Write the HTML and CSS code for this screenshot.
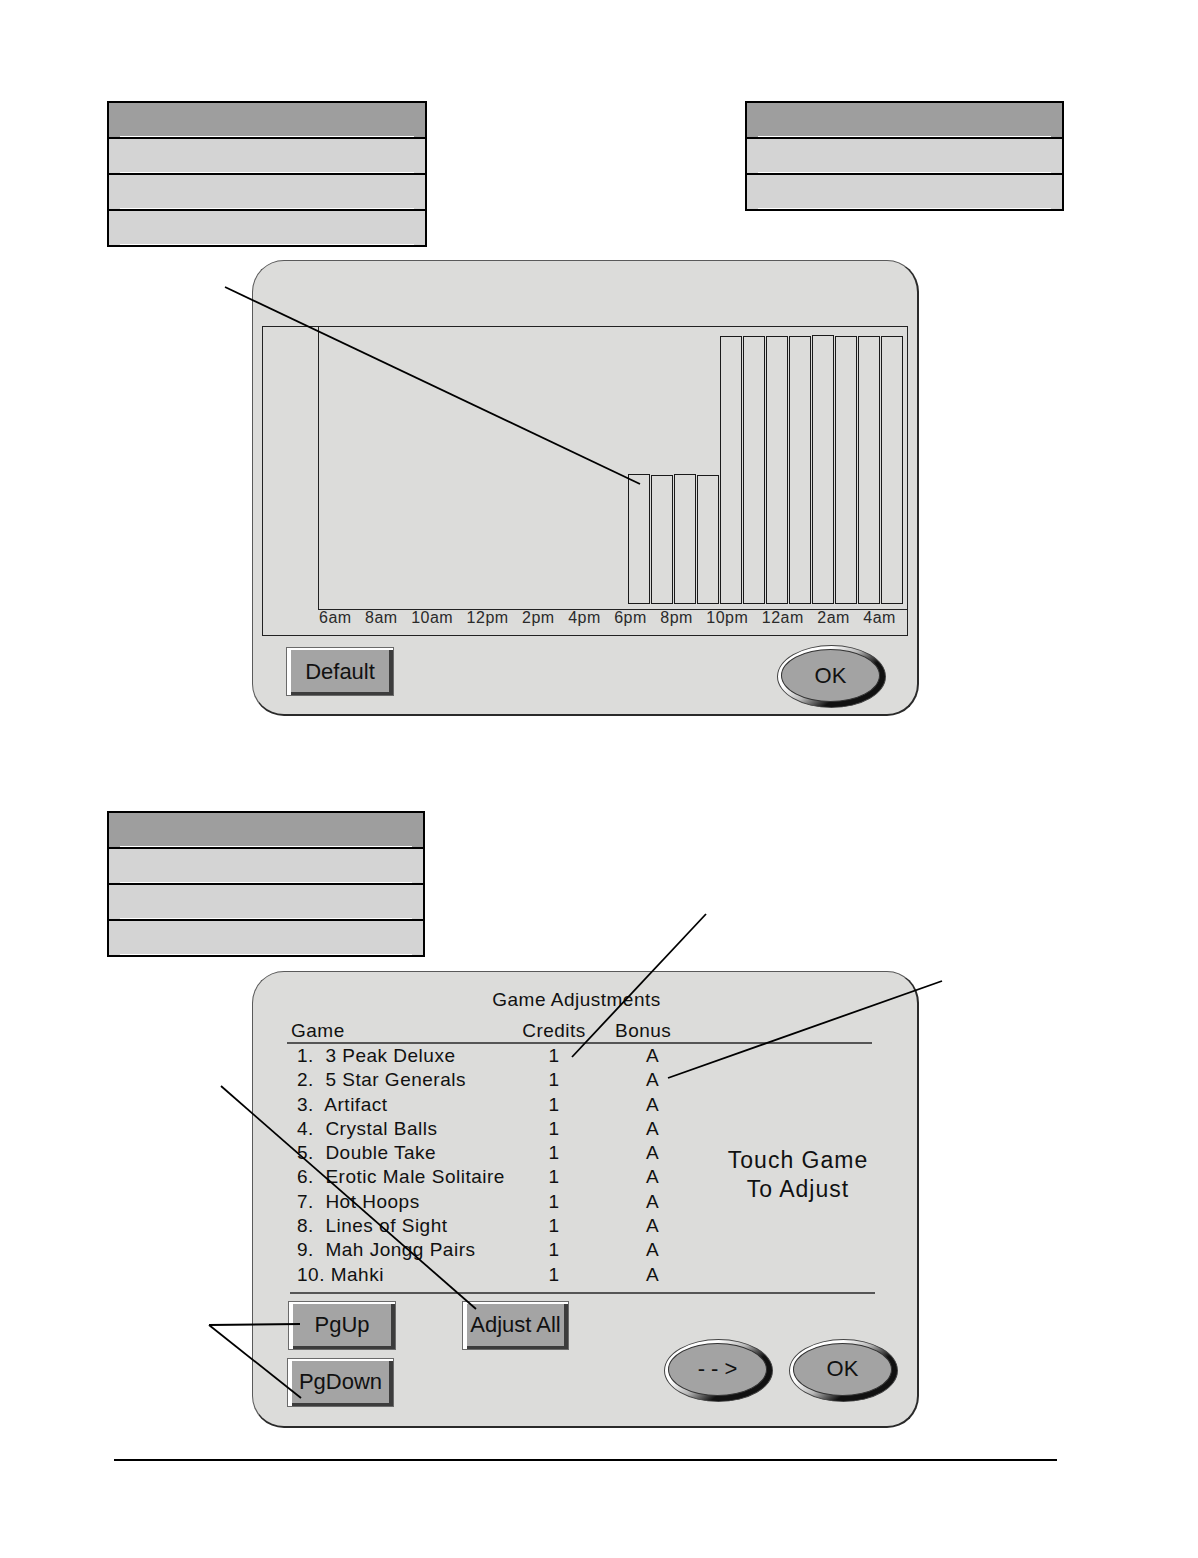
FILE: index.html
```html
<!DOCTYPE html>
<html lang="en">
<head>
    <meta charset="UTF-8">
    <title>Game Adjustments</title>
    <link rel="stylesheet" href="styles.css">
</head>
<body>
    <div class="page">
        <div class="menu-row">
            <div class="menu menu-wide">
                <div class="menu-item menu-head"></div>
                <div class="menu-item"></div>
                <div class="menu-item"></div>
                <div class="menu-item"></div>
            </div>
            <div class="menu menu-narrow">
                <div class="menu-item menu-head"></div>
                <div class="menu-item"></div>
                <div class="menu-item"></div>
            </div>
        </div>

        <!-- hourly chart screen -->
        <div class="panel panel-chart">
            <div class="chart">
                <div class="plot">
                    <div class="bar" style="height:130px"></div>
                    <div class="bar" style="height:129px"></div>
                    <div class="bar" style="height:130px"></div>
                    <div class="bar" style="height:129px"></div>
                    <div class="bar" style="height:268px"></div>
                    <div class="bar" style="height:268px"></div>
                    <div class="bar" style="height:268px"></div>
                    <div class="bar" style="height:268px"></div>
                    <div class="bar" style="height:269px"></div>
                    <div class="bar" style="height:268px"></div>
                    <div class="bar" style="height:268px"></div>
                    <div class="bar" style="height:268px"></div>
                </div>
                <div class="axis">
                    <span>6am</span><span>8am</span><span>10am</span><span>12pm</span>
                    <span>2pm</span><span>4pm</span><span>6pm</span><span>8pm</span>
                    <span>10pm</span><span>12am</span><span>2am</span><span>4am</span>
                </div>
            </div>
            <div class="panel-foot">
                <button class="btn">Default</button>
                <div class="oval oval-raised"><div class="oval-face">OK</div></div>
            </div>
        </div>

        <div class="menu menu-small">
            <div class="menu-item menu-head"></div>
            <div class="menu-item"></div>
            <div class="menu-item"></div>
            <div class="menu-item"></div>
        </div>

        <!-- game adjustments screen -->
        <div class="panel panel-games">
            <div class="games">
                <div class="games-title">Game Adjustments</div>
                <div class="games-head">
                    <span class="h-game">Game</span>
                    <span class="h-credits">Credits</span>
                    <span class="h-bonus">Bonus</span>
                </div>
                <div class="games-body">
                    <div class="games-list">
                        <div class="game"><span class="game-name">1.  3 Peak Deluxe</span><span class="game-credits">1</span><span class="game-bonus">A</span></div>
                        <div class="game"><span class="game-name">2.  5 Star Generals</span><span class="game-credits">1</span><span class="game-bonus">A</span></div>
                        <div class="game"><span class="game-name">3.  Artifact</span><span class="game-credits">1</span><span class="game-bonus">A</span></div>
                        <div class="game"><span class="game-name">4.  Crystal Balls</span><span class="game-credits">1</span><span class="game-bonus">A</span></div>
                        <div class="game"><span class="game-name">5.  Double Take</span><span class="game-credits">1</span><span class="game-bonus">A</span></div>
                        <div class="game"><span class="game-name">6.  Erotic Male Solitaire</span><span class="game-credits">1</span><span class="game-bonus">A</span></div>
                        <div class="game"><span class="game-name">7.  Hot Hoops</span><span class="game-credits">1</span><span class="game-bonus">A</span></div>
                        <div class="game"><span class="game-name">8.  Lines of Sight</span><span class="game-credits">1</span><span class="game-bonus">A</span></div>
                        <div class="game"><span class="game-name">9.  Mah Jongg Pairs</span><span class="game-credits">1</span><span class="game-bonus">A</span></div>
                        <div class="game"><span class="game-name">10. Mahki</span><span class="game-credits">1</span><span class="game-bonus">A</span></div>
                    </div>
                    <div class="games-hint">Touch Game<br>To Adjust</div>
                </div>
                <div class="games-rule"></div>
            </div>
            <div class="games-actions">
                <div class="pager">
                    <button class="btn">PgUp</button>
                    <button class="btn btn-down">PgDown</button>
                </div>
                <button class="btn btn-adjust">Adjust All</button>
                <div class="ovals">
                    <div class="oval"><div class="oval-face">- - &gt;</div></div>
                    <div class="oval"><div class="oval-face">OK</div></div>
                </div>
            </div>
        </div>

        <div class="page-rule"></div>

        <!-- callout leader lines -->
        <svg class="leaders" width="1198" height="1558" viewBox="0 0 1198 1558">
            <g stroke="#000" stroke-width="1.8" fill="none">
                <line x1="225" y1="287" x2="640" y2="484"/>
                <line x1="706" y1="914" x2="572" y2="1057"/>
                <line x1="942" y1="981" x2="668" y2="1078"/>
                <line x1="221" y1="1086" x2="476" y2="1309"/>
                <line x1="209" y1="1325" x2="300" y2="1324"/>
                <line x1="209" y1="1325" x2="301" y2="1398"/>
            </g>
        </svg>
    </div>
</body>
</html>
```

FILE: styles.css
```css
body {
    margin: 0;
    background-color: #ffffff;
    font-family: "Liberation Sans", Arial, sans-serif;
    color: #111111;
}
.page {
    position: relative;
    width: 1198px;
    height: 1558px;
    padding-top: 101px;
    box-sizing: border-box;
}
.leaders {
    position: absolute;
    left: 0;
    top: 0;
    pointer-events: none;
}

/* menu boxes */
.menu-row {
    display: flex;
    justify-content: space-between;
    align-items: flex-start;
    padding: 0 134px 0 107px;
}
.menu {
    border: 2px solid #000;
    box-sizing: border-box;
}
.menu-wide {
    width: 320px;
}
.menu-narrow {
    width: 319px;
}
.menu-small {
    width: 318px;
    margin: 95px 0 0 107px;
}
.menu-item {
    height: 34px;
    border-bottom: 2px solid #000;
    background: linear-gradient(#ffffff, #ffffff) center bottom / calc(100% - 22px) 1px no-repeat, #d4d4d4;
}
.menu-item:last-child {
    border-bottom: 0;
}
.menu-head {
    background-color: #9e9e9e;
}

/* screens */
.panel {
    margin-left: 252px;
    width: 667px;
    box-sizing: border-box;
    background-color: #dcdcda;
    border: 1px solid #5a5a5a;
    border-right: 2px solid #2a2a2a;
    border-bottom: 2px solid #2a2a2a;
    border-radius: 32px;
}
.panel-chart {
    margin-top: 13px;
    height: 456px;
    padding: 65px 0 0 9px;
}
.chart {
    width: 646px;
    height: 310px;
    box-sizing: border-box;
    border: 1px solid #222;
    display: flex;
    flex-direction: column;
}
.plot {
    margin-left: 55px;
    height: 283px;
    box-sizing: border-box;
    border-left: 1px solid #222;
    border-bottom: 1px solid #222;
    display: flex;
    align-items: flex-end;
    justify-content: flex-end;
    gap: 1px;
    padding: 0 4px 5px 0;
}
.bar {
    width: 22px;
    box-sizing: border-box;
    border: 1px solid #1a1a1a;
}
.axis {
    display: flex;
    justify-content: space-between;
    margin-top: 1px;
    padding: 0 11px 0 56px;
    font-size: 16px;
    line-height: 14px;
    letter-spacing: 0.5px;
    color: #2a2a2a;
}
.panel-foot {
    display: flex;
    justify-content: space-between;
    align-items: flex-start;
    margin: 11px 31px 0 24px;
}

/* bevel buttons */
.btn {
    display: flex;
    align-items: center;
    justify-content: center;
    width: 108px;
    height: 49px;
    padding: 0;
    box-sizing: border-box;
    background-color: #a4a4a4;
    border: 1px solid #6a6a6a;
    box-shadow: inset 4px 2px 0 #ffffff, inset -4px -3px 0 #3c3c3c;
    font-family: inherit;
    font-size: 22px;
    color: #111111;
}
.btn-down {
    width: 107px;
    margin-left: -1px;
}
.btn-adjust {
    width: 107px;
    margin-left: 66px;
}

/* oval buttons */
.oval {
    width: 109px;
    height: 63px;
    box-sizing: border-box;
    border-radius: 50%;
    border: 1px solid #444;
    padding: 3px 5px 5px 3px;
    background: linear-gradient(140deg, #ffffff 30%, #b8b8b8 48%, #111111 66%);
}
.oval-raised {
    margin-top: -2px;
}
.oval-face {
    height: 100%;
    box-sizing: border-box;
    border-radius: 50%;
    border: 1px solid #333;
    background-color: #a3a3a3;
    display: flex;
    align-items: center;
    justify-content: center;
    font-size: 22px;
}

/* game list */
.panel-games {
    margin-top: 14px;
    height: 457px;
    padding-top: 16px;
}
.games {
    margin-left: 34px;
}
.games-title {
    width: 585px;
    box-sizing: border-box;
    padding-right: 6px;
    text-align: center;
    font-size: 19px;
    line-height: 24px;
    letter-spacing: 0.5px;
}
.games-head {
    width: 585px;
    margin-top: 7px;
    display: grid;
    grid-template-columns: 235px 64px 1fr;
    font-size: 19px;
    line-height: 23px;
    letter-spacing: 0.5px;
    border-bottom: 2px solid #555;
}
.h-game {
    padding-left: 4px;
}
.h-credits {
    text-align: center;
}
.h-bonus {
    padding-left: 29px;
}
.games-body {
    display: flex;
}
.games-list {
    width: 413px;
    font-size: 19px;
    letter-spacing: 0.5px;
}
.game {
    display: grid;
    grid-template-columns: 235px 64px 1fr;
    line-height: 24.3px;
}
.game-name {
    padding-left: 10px;
    white-space: pre;
}
.game-credits {
    text-align: center;
}
.game-bonus {
    padding-left: 60px;
}
.games-hint {
    width: 196px;
    margin-top: 102px;
    text-align: center;
    font-size: 23px;
    line-height: 29px;
    letter-spacing: 1px;
}
.games-rule {
    width: 585px;
    margin: 5px 0 0 3px;
    border-top: 2px solid #555;
}
.games-actions {
    display: flex;
    align-items: flex-start;
    margin: 7px 19px 0 35px;
}
.pager {
    display: flex;
    flex-direction: column;
    gap: 8px;
}
.ovals {
    display: flex;
    gap: 16px;
    margin: 38px 0 0 auto;
}

.page-rule {
    width: 943px;
    margin: 31px 0 0 114px;
    border-top: 2px solid #000;
}
```
